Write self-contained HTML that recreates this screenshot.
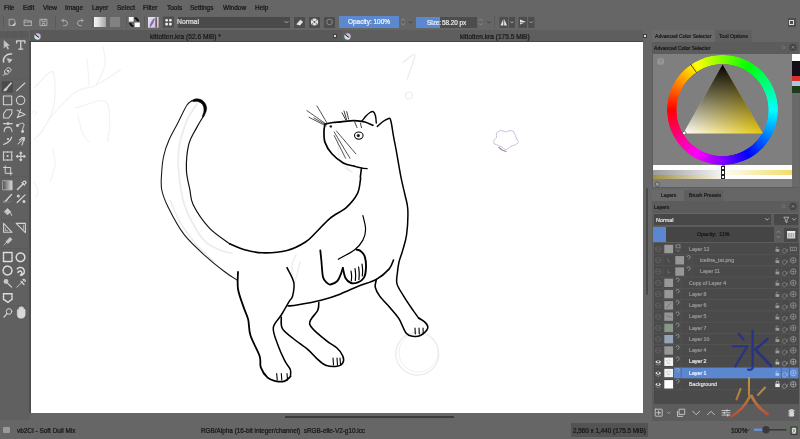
<!DOCTYPE html>
<html><head><meta charset="utf-8">
<style>
*{box-sizing:border-box;margin:0;padding:0}
html,body{width:800px;height:439px;overflow:hidden;background:#666;font-family:"Liberation Sans",sans-serif;color:#222}
.a{position:absolute}
.t{position:absolute;white-space:nowrap;line-height:1;will-change:transform;-webkit-text-stroke:0.22px currentColor}
#menu .t{font-size:6.4px;color:#1e1e1e;top:4.5px}
.btn{position:absolute;background:#555;border-radius:1px}
.sep{position:absolute;width:1px;background:#5a5a5a}
</style></head><body>
<!--TOP--><div class="t" style="left:4px;top:5.3px;font-size:6.5px;color:#161616;">File</div>
<div class="t" style="left:23px;top:5.3px;font-size:6.5px;color:#161616;">Edit</div>
<div class="t" style="left:42.5px;top:5.3px;font-size:6.5px;color:#161616;">View</div>
<div class="t" style="left:64.5px;top:5.3px;font-size:6.5px;color:#161616;">Image</div>
<div class="t" style="left:92px;top:5.3px;font-size:6.5px;color:#161616;">Layer</div>
<div class="t" style="left:117px;top:5.3px;font-size:6.5px;color:#161616;">Select</div>
<div class="t" style="left:143px;top:5.3px;font-size:6.5px;color:#161616;">Filter</div>
<div class="t" style="left:167px;top:5.3px;font-size:6.5px;color:#161616;">Tools</div>
<div class="t" style="left:190px;top:5.3px;font-size:6.5px;color:#161616;">Settings</div>
<div class="t" style="left:222.5px;top:5.3px;font-size:6.5px;color:#161616;">Window</div>
<div class="t" style="left:254.5px;top:5.3px;font-size:6.5px;color:#161616;">Help</div>
<div class="a" style="left:2.8px;top:15.5px;width:1px;height:12.5px;background:#5a5a5a;"></div>
<div class="a" style="left:55px;top:15.5px;width:1px;height:12.5px;background:#5a5a5a;"></div>
<div class="a" style="left:92px;top:15.5px;width:1px;height:12.5px;background:#5a5a5a;"></div>
<div class="a" style="left:125.6px;top:15.5px;width:1px;height:12.5px;background:#5a5a5a;"></div>
<div class="a" style="left:144px;top:15.5px;width:1px;height:12.5px;background:#5a5a5a;"></div>
<div class="a" style="left:494px;top:15.5px;width:1px;height:12.5px;background:#5a5a5a;"></div>
<svg class="a" style="left:0;top:0" width="800" height="40"><g fill="none" stroke="#b4b4b4" stroke-width="0.9" stroke-linejoin="round" stroke-linecap="round"><path d="M9.5 19.3h4.2l1.3 1.3v4.8h-5.5z"/><path d="M13.2 25.4l1.8-1.8" stroke="#e0e0e0" stroke-width="1.2"/><path d="M24.5 20h2.5l0.8 0.8h3.6v4.8h-6.9z"/><path d="M24.5 22h6.9"/><path d="M40.3 19.3h6.6v6.3h-6.6z"/><path d="M42 19.3v2.4h3v-2.4M42.3 25.6v-2.2h2.6v2.2"/><path d="M62 20.5l1.6-1.6M62 20.5l1.6 1.5M62.3 20.5h2.5a2.6 2.6 0 0 1 0 5.2h-1.2"/><path d="M83 20.5l-1.6-1.6M83 20.5l-1.6 1.5M82.7 20.5h-2.5a2.6 2.6 0 0 0 0 5.2h1.2"/></g><rect x="128.8" y="17" width="4.8" height="4.6" fill="#fafafa"/><rect x="134.6" y="22.5" width="5.2" height="4.6" fill="#fafafa"/><path d="M134.6 17.2a4 4 0 0 1 4 4h-1.8a2.2 2.2 0 0 0-2.2-2.2z" fill="#111"/><circle cx="138.2" cy="20.6" r="0.9" fill="#111"/><path d="M133.6 27a4 4 0 0 1-4-4h1.8a2.2 2.2 0 0 0 2.2 2.2z" fill="#111"/><circle cx="130" cy="23.6" r="0.9" fill="#111"/><defs><linearGradient id="bp" x1="0" y1="0" x2="1" y2="1"><stop offset="0" stop-color="#e8e4f0"/><stop offset="1" stop-color="#c8c0d8"/></linearGradient></defs><rect x="148" y="17" width="10.6" height="10.7" fill="url(#bp)"/><path d="M149.6 26.6c0.2-2 1.5-5 3.6-7.6 0.8-0.8 1.6-0.4 1.4 0.6-0.6 2.6-2.2 5.6-4 7.2z" fill="#7860b0" opacity="0.9"/><rect x="155.3" y="17.3" width="1.6" height="10.2" fill="#6a5050"/><rect x="162.8" y="16.5" width="11.2" height="11.2" fill="#4e4e4e"/><rect x="165.2" y="19" width="2.8" height="2.6" rx="1" fill="#e8e8e8"/><rect x="169" y="19" width="2.8" height="2.6" rx="1" fill="#e8e8e8"/><rect x="165.2" y="22.8" width="2.8" height="2.6" rx="1" fill="#e8e8e8"/><rect x="169" y="22.8" width="2.8" height="2.6" rx="1" fill="#e8e8e8"/></svg>
<div class="a" style="left:94px;top:16.9px;width:11.6px;height:10.6px;background:linear-gradient(90deg,#f2f2f2,#e6e6e6 30%,#a4a4a4);"></div>
<div class="a" style="left:109.6px;top:16.9px;width:10.4px;height:10.6px;background:#818181;"></div>
<div class="a" style="left:177.7px;top:16.7px;width:112.3px;height:11px;background:#4a4a4a;"></div>
<div class="t" style="left:177.3px;top:19.3px;font-size:6.8px;color:#e0e0e0;">Normal</div>
<svg class="a" style="left:0;top:0" width="800" height="40"><g fill="none" stroke="#bbb" stroke-width="0.8"><path d="M284.5 21l2 2 2-2"/></g></svg>
<div class="a" style="left:294px;top:16.5px;width:11px;height:11px;background:#4d4d4d;"></div>
<div class="a" style="left:309px;top:16.5px;width:11px;height:11px;background:#4d4d4d;"></div>
<div class="a" style="left:324px;top:16.5px;width:11px;height:11px;background:#4d4d4d;"></div>
<svg class="a" style="left:0;top:0" width="800" height="40"><path d="M296.5 24.5h4.5M297 23.8l3.5-3.8 2.2 2-3 3.3z" fill="#e6e6e6" stroke="#e6e6e6" stroke-width="0.6"/><circle cx="314.5" cy="22" r="3.6" fill="#e6e6e6"/><circle cx="314.5" cy="22" r="1.1" fill="#4d4d4d"/><circle cx="312.6" cy="20.1" r="0.7" fill="#4d4d4d"/><circle cx="316.4" cy="20.1" r="0.7" fill="#4d4d4d"/><circle cx="312.6" cy="23.9" r="0.7" fill="#4d4d4d"/><circle cx="316.4" cy="23.9" r="0.7" fill="#4d4d4d"/><circle cx="329.5" cy="22" r="2.8" fill="none" stroke="#999" stroke-width="0.8"/></svg>
<div class="a" style="left:338.5px;top:16.2px;width:60.5px;height:11.8px;background:#5b88cf;"></div>
<div class="t" style="left:347.8px;top:19.2px;font-size:6.46px;color:#eef2fa;">Opacity: 100%</div>
<div class="a" style="left:416.2px;top:16.9px;width:60.5px;height:11px;background:#4d4d4d;"></div>
<div class="a" style="left:416.2px;top:16.9px;width:23.4px;height:11px;background:#5b88cf;"></div>
<div class="t" style="left:427px;top:19.5px;font-size:6.33px;color:#eef2fa;">Size:</div>
<div class="t" style="left:441.7px;top:19.5px;font-size:6.33px;color:#e8e8e8;">58.20 px</div>
<svg class="a" style="left:0;top:0" width="800" height="40"><g fill="none" stroke="#999" stroke-width="0.7" stroke-linecap="round" stroke-linejoin="round"><path d="M401.5 20.5l1.6-1.6 1.6 1.6M401.5 23.5l1.6 1.6 1.6-1.6"/><path d="M479 20.5l1.6-1.6 1.6 1.6M479 23.5l1.6 1.6 1.6-1.6"/></g><g fill="none" stroke="#333" stroke-width="0.8"><path d="M409 21.5l1.6 1.6 1.6-1.6"/><path d="M487.3 21.5l1.6 1.6 1.6-1.6"/></g><rect x="499.5" y="16.9" width="8.5" height="11" fill="#4d4d4d"/><rect x="509" y="16.9" width="6" height="11" fill="#4d4d4d"/><rect x="518.5" y="16.9" width="8.5" height="11" fill="#4d4d4d"/><rect x="528.2" y="16.9" width="6.2" height="11" fill="#4d4d4d"/><path d="M503.3 19v6.5h-2.8z" fill="#e6e6e6"/><path d="M504.2 19v6.5h2.8z" fill="#e6e6e6"/><path d="M520 19.5l6 2.5-6 2.5z" fill="#e6e6e6"/><path d="M520 22.6h6" stroke="#4d4d4d" stroke-width="0.6"/><g fill="none" stroke="#ccc" stroke-width="0.7"><path d="M510.5 21.5l1.5 1.5 1.5-1.5M529.8 21.5l1.5 1.5 1.5-1.5"/></g></svg>
<div class="a" style="left:787.5px;top:17.5px;width:8px;height:9.5px;background:#4d4d4d;"></div>
<div class="a" style="left:789px;top:19.5px;width:5px;height:5px;border:0.8px solid #ddd"></div>
<div class="a" style="left:0px;top:30.5px;width:28.5px;height:7px;background:#5a5a5a;"></div>
<div class="a" style="left:7px;top:31px;width:0.6px;height:6px;background:#555;"></div>
<div class="a" style="left:14px;top:31px;width:0.6px;height:6px;background:#555;"></div>
<div class="a" style="left:21px;top:31px;width:0.6px;height:6px;background:#555;"></div>
<div class="a" style="left:0px;top:37.5px;width:30px;height:382.5px;background:#606060;"></div>
<div class="a" style="left:30px;top:30px;width:613px;height:11.5px;background:#595959;"></div>
<div class="a" style="left:342px;top:30px;width:301px;height:11.5px;background:#5e5e5e;"></div>
<div class="t" style="left:150px;top:33.6px;font-size:6.62px;color:#1a1a1a;">kittotten.kra (52.6 MiB) *</div>
<div class="t" style="left:460.25px;top:33.6px;font-size:6.57px;color:#1a1a1a;">kittotten.kra (175.5 MiB)</div>
<svg class="a" style="left:33.5px;top:32.5px" width="7" height="7" viewBox="0 0 7 7"><defs><linearGradient id="ki37" x1="1" y1="0" x2="0" y2="1"><stop offset="0" stop-color="#e8b0e8"/><stop offset="0.5" stop-color="#c8b8e0"/><stop offset="0.55" stop-color="#e8f4f4"/><stop offset="1" stop-color="#80d0d0"/></linearGradient></defs><circle cx="3.5" cy="3.5" r="3.2" fill="url(#ki37)"/><path d="M1.3 1.6l3 2.6" stroke="#2a2a40" stroke-width="1.1" stroke-linecap="round"/></svg>
<svg class="a" style="left:344.3px;top:32.5px" width="7" height="7" viewBox="0 0 7 7"><defs><linearGradient id="ki347" x1="1" y1="0" x2="0" y2="1"><stop offset="0" stop-color="#e8b0e8"/><stop offset="0.5" stop-color="#c8b8e0"/><stop offset="0.55" stop-color="#e8f4f4"/><stop offset="1" stop-color="#80d0d0"/></linearGradient></defs><circle cx="3.5" cy="3.5" r="3.2" fill="url(#ki347)"/><path d="M1.3 1.6l3 2.6" stroke="#2a2a40" stroke-width="1.1" stroke-linecap="round"/></svg>
<div class="a" style="left:332.5px;top:33.8px;width:4.8px;height:4.4px;background:#3e3e3e;"></div>
<div class="a" style="left:334.0px;top:35.2px;width:1.8px;height:1.6px;background:#ddd;"></div>
<div class="a" style="left:642.5px;top:33.8px;width:4.8px;height:4.4px;background:#3e3e3e;"></div>
<div class="a" style="left:644.0px;top:35.2px;width:1.8px;height:1.6px;background:#ddd;"></div>
<div class="a" style="left:29.2px;top:41px;width:1.4px;height:371.5px;background:#4e4e4e;"></div>
<div class="a" style="left:29.2px;top:41px;width:614px;height:1.1px;background:#464646;"></div>
<div class="a" style="left:3.2px;top:427px;width:7px;height:6.3px;background:#9a9a9a;border-radius:1px"></div>
<div class="t" style="left:17px;top:428px;font-size:6.43px;color:#161616;">vb2CI - Soft Dull Mix</div>
<div class="t" style="left:200.6px;top:428px;font-size:6.39px;color:#161616;">RGB/Alpha (16-bit integer/channel)&nbsp; sRGB-elle-V2-g10.icc</div>
<div class="a" style="left:571px;top:423.4px;width:77px;height:13.6px;background:#535353;"></div>
<div class="t" style="left:573.4px;top:428px;font-size:6.33px;color:#161616;">2,560 x 1,440 (175.5 MiB)</div>
<div class="t" style="left:730.6px;top:428px;font-size:6.4px;color:#161616;">100%</div>
<svg class="a" style="left:0;top:400px" width="800" height="39"><path d="M746.5 29l1.6 1.6 1.6-1.6" fill="none" stroke="#222" stroke-width="0.7"/><rect x="753.5" y="29" width="33" height="1.6" fill="#3a3a3a"/><rect x="753.5" y="28.6" width="12.5" height="2.4" fill="#6a90d0" rx="1"/><circle cx="766" cy="29.8" r="3.7" fill="#3a3a3a"/><rect x="790.5" y="26.5" width="7" height="8.5" fill="#3a3a3a"/><rect x="791.8" y="27.8" width="4.4" height="5.8" fill="#e0e8e0"/><path d="M792.4 28.6l3.2 4.2M795.6 28.6l-3.2 4.2" stroke="#3a8a3a" stroke-width="0.7"/></svg>
<div class="a" style="left:285px;top:416.2px;width:169px;height:1.8px;background:#3c3c3c;"></div><!--/TOP-->
<!-- CANVAS -->
<div class="a" style="left:30.5px;top:42px;width:612.5px;height:370.5px;background:#fff;overflow:hidden">
</div>
<!--TOOLS--><svg class="a" style="left:0;top:0" width="30" height="439"><rect x="1.8" y="81.2" width="11" height="11.4" fill="#4b4b4b"/><rect x="1" y="78.5" width="27" height="0.6" fill="#585858"/><rect x="1" y="148.7" width="27" height="0.6" fill="#585858"/><rect x="1" y="176.5" width="27" height="0.6" fill="#585858"/><rect x="1" y="220" width="27" height="0.6" fill="#585858"/><rect x="1" y="248" width="27" height="0.6" fill="#585858"/><rect x="1" y="305.5" width="27" height="0.6" fill="#585858"/><g fill="none" stroke="#d2d2d2" stroke-width="1.05" stroke-linecap="round" stroke-linejoin="round"><path d="M4.2 40.7l5.2 4.6-2.3 0.3 1.6 3.2-1 0.5-1.6-3.2-1.9 1.6z" fill="#c8c8c8" stroke="#c8c8c8" stroke-width="0.5"/><path d="M16.6 40.8h8.3v2.3M16.6 40.8v2.3M20.75 40.8v8.3M18.7 49.1h4.1" stroke-width="1.3"/><path d="M3.5 62a7 7 0 0 1 8-8" stroke-width="1.5"/><path d="M7.3 58.5l4.8 1.2-2.8 3z" fill="#c8c8c8" stroke-width="0.5"/><path d="M16.8 54.6l9.2 8.8" stroke="#6a5c78" stroke-width="0.8" stroke-dasharray="1.2 1"/><path d="M3.2 75.5l2.5-2.5M5 73.5l-0.5-2.5 4-4 3 3-4 4z" stroke-width="1"/><circle cx="8" cy="70.8" r="0.6" fill="#c4c4c4"/><path d="M11 83.2l-4.2 4.8" stroke-width="1.6"/><path d="M4 90.8c0-1.8 1.2-3.2 3-2.8 0.6 1.8-0.8 3.2-3 2.8z" fill="#d0d0d0" stroke-width="0.6"/><path d="M16.5 90.8l8.4-7.8"/><rect x="3.4" y="96" width="8.3" height="8.7"/><circle cx="20.6" cy="100.3" r="4.2"/><path d="M3.6 113.6l2.9-3.8h5.4v3.6l-3.2 4.6h-5.1z"/><path d="M17.2 110.2l8 4.4-8 3M17.5 117.6l3.2-8.2"/><path d="M4.2 131.6c0-6 7.8-6 7.8 0M3.5 123.6h8.8"/><circle cx="8" cy="123.6" r="0.9" fill="#c4c4c4"/><path d="M17.3 126c2-3 7-4 6.7-1-0.3 2.4-2.2 3.4-1.2 6.6" stroke-width="1"/><circle cx="17.5" cy="125.5" r="0.9" fill="#c4c4c4"/><circle cx="22.6" cy="131.5" r="0.9" fill="#c4c4c4"/><path d="M3.5 144.5c3-1 7-3 8.2-7.5"/><circle cx="8" cy="139" r="0.6" fill="#c4c4c4"/><path d="M18 144l6.5-6.5M24.5 137.5l-3 0.3M24.5 137.5l-0.3 3M19.5 140l3-2.5M22 145l2-6"/><rect x="3.5" y="152" width="8.2" height="8"/><circle cx="7.6" cy="156" r="0.5" fill="#c4c4c4"/><rect x="2.8" y="151.3" width="1.4" height="1.4" fill="#c4c4c4" stroke="none"/><rect x="11.0" y="151.3" width="1.4" height="1.4" fill="#c4c4c4" stroke="none"/><rect x="2.8" y="159.3" width="1.4" height="1.4" fill="#c4c4c4" stroke="none"/><rect x="11.0" y="159.3" width="1.4" height="1.4" fill="#c4c4c4" stroke="none"/><rect x="6.8999999999999995" y="151.3" width="1.4" height="1.4" fill="#c4c4c4" stroke="none"/><rect x="6.8999999999999995" y="159.3" width="1.4" height="1.4" fill="#c4c4c4" stroke="none"/><rect x="2.8" y="155.3" width="1.4" height="1.4" fill="#c4c4c4" stroke="none"/><rect x="11.0" y="155.3" width="1.4" height="1.4" fill="#c4c4c4" stroke="none"/><path d="M20.8 152.4v8M16.8 156.4h8" stroke-width="1.1"/><path d="M20.8 152l-1 1.2h2zM20.8 160.8l-1-1.2h2zM16.4 156.4l1.2-1v2zM25.2 156.4l-1.2-1v2z" fill="#c4c4c4"/><path d="M5.2 165.8v7.5h7M3.5 167.5h7.2v7.5" stroke-width="1"/><rect x="3" y="180.7" width="9.2" height="9.2" fill="url(#tg)" stroke="#bbb" stroke-width="0.7"/><path d="M17.5 189.5l5.8-5.8" stroke-width="1.5"/><path d="M22 182.5l2.6 2.6M23.5 181.5a1.3 1.3 0 0 1 2 2" stroke-width="1.4"/><path d="M11.5 194.5l-4.5 5" stroke-width="1.3"/><path d="M4 202c1-1.2 2-2.8 3.2-2.5 0.4 1.4-1.5 2.8-3.2 2.5z" fill="#c8c8c8" stroke-width="0.5"/><path d="M3 200a5 3 0 0 0 9 1" stroke="#888" stroke-width="0.6"/><path d="M17.2 202.5l7.8-7.6" stroke-width="1.3"/><circle cx="18.3" cy="196" r="1" fill="#c4c4c4"/><circle cx="24" cy="201.5" r="1" fill="#c4c4c4"/><path d="M4.5 211.5l3-3 3.2 3.2-3 3z" fill="#c8c8c8" stroke-width="0.7"/><path d="M10.5 212.5l1.2 3" stroke-width="0.9"/><path d="M3.6 223.3v9h8.5z" stroke-width="1.1"/><path d="M5.4 228.2v2.4h2.4" stroke-width="0.7"/><path d="M16.2 223.4h9.2v9.2z" stroke-width="1.1"/><path d="M23.6 225.2v4" stroke-width="0.7"/><path d="M4 245l3-3" stroke-width="0.8"/><path d="M6.2 241.5l3.8-4 2 2-4 3.8z" fill="#c8c8c8" stroke-width="0.8"/><g stroke-dasharray="1.6 1" stroke-width="1.5" stroke="#dedede"><rect x="3.5" y="252.5" width="8.5" height="9"/><circle cx="20.5" cy="257.3" r="4.3"/><circle cx="7.5" cy="270.5" r="4.4"/><path d="M17.3 268.8a4 4 0 1 1 4 6.5M18 272.5a2 2 0 1 1 2.5 2.5"/><path d="M3.5 293.8h8.5v5.5l-4 3-4.5-3z"/></g><circle cx="6" cy="281.5" r="2.4" fill="#c8c8c8" stroke="none"/><path d="M7.8 283.5l3.8 3.6" stroke-width="1.1"/><path d="M17 287.2l7-7" stroke-width="1" stroke-dasharray="1.3 1"/><path d="M21 281.5l3 3M23 279.5a1.5 1.5 0 0 1 2 2" stroke-width="1.3"/><circle cx="9" cy="311.5" r="2.8" stroke-width="1"/><path d="M7 313.6l-3 3.5" stroke-width="1.3"/><path d="M17.2 312.6v-2.4a0.8 0.8 0 0 1 1.6 0v1.5v-3.6a0.8 0.8 0 0 1 1.6 0v3.2v-4a0.8 0.8 0 0 1 1.6 0v4v-3.4a0.8 0.8 0 0 1 1.6 0v3.8v-1.8a0.8 0.8 0 0 1 1.6 0v4.6c0 2.2-1.4 3.8-3.4 3.8h-1.6c-1.6 0-2.6-1.2-3-3z" fill="#dadada" stroke="#dadada" stroke-width="0.4"/></g><defs><linearGradient id="tg" x1="0" y1="0" x2="1" y2="0"><stop offset="0" stop-color="#555"/><stop offset="1" stop-color="#ddd"/></linearGradient></defs></svg><!--/TOOLS-->
<!--CAT--><svg class="a" style="left:0;top:0" width="800" height="439" viewBox="0 0 800 439"><defs><clipPath id="cv"><rect x="30.5" y="42" width="612.5" height="370.5"/></clipPath></defs><g clip-path="url(#cv)" fill="none" stroke-linecap="round" stroke-linejoin="round">
<path d="M197.0 104.0 C195.5 106.3 190.7 112.3 188.0 118.0 C185.3 123.7 182.6 132.7 181.0 138.0 C179.4 143.3 179.1 144.7 178.7 150.0 C178.3 155.3 177.8 161.7 178.5 170.0 C179.2 178.3 180.8 191.3 183.0 200.0 C185.2 208.7 188.3 215.1 192.0 222.0 C195.7 228.9 200.6 237.0 205.3 241.7 C210.0 246.4 215.6 248.0 220.0 250.0 C224.4 252.0 230.0 252.9 232.0 253.5" stroke="#ececec" stroke-width="1.8"/>
<path d="M170.0 200.0 C171.7 203.7 175.7 214.7 180.0 222.0 C184.3 229.3 190.3 237.3 196.0 244.0 C201.7 250.7 211.0 259.0 214.0 262.0" stroke="#ededed" stroke-width="1.5"/>
<circle cx="417.3" cy="353.7" r="21.5" fill="none" stroke="#eaeaea" stroke-width="1.2"/><circle cx="418.5" cy="352.5" r="19.5" fill="none" stroke="#efefef" stroke-width="1"/>
<path d="M296.0 255.0 C295.3 256.8 292.3 261.2 292.0 266.0 C291.7 270.8 292.7 284.7 294.0 284.0 C295.3 283.3 299.0 265.7 300.0 262.0" stroke="#eeeeee" stroke-width="1.5"/>
<path d="M338.0 140.0 C338.3 143.3 337.7 154.7 340.0 160.0 C342.3 165.3 351.2 170.7 352.0 172.0 C352.8 173.3 346.2 168.7 345.0 168.0" stroke="#eeeeee" stroke-width="1.2"/>
<path d="M403.3 62.2 C405.2 61.0 414.3 52.4 414.9 55.2 C415.5 58.0 408.4 75.2 407.1 79.2" stroke="#ebebeb" stroke-width="1.2"/>
<circle cx="409" cy="95.5" r="3.5" fill="none" stroke="#ededed" stroke-width="1.2"/>
<path d="M34.5 87.6 C37.4 84.9 48.2 71.6 51.6 71.6 C55.0 71.6 54.8 81.2 55.0 87.6 C55.2 94.0 54.7 103.2 52.8 110.0 C50.9 116.8 46.8 123.6 43.7 128.6 C40.6 133.6 35.6 138.1 34.0 140.0" stroke="#f1f1f1" stroke-width="1.2"/>
<circle cx="34.5" cy="112.6" r="2" fill="none" stroke="#efefef" stroke-width="0.8"/>
<path d="M50.5 117.0 C54.7 112.8 68.0 97.3 75.6 92.0 C83.2 86.7 88.4 89.1 96.0 85.3 C103.6 81.5 116.8 72.0 121.0 69.3" stroke="#f2f2f2" stroke-width="1.2"/>
<path d="M96.0 85.3 C97.5 81.9 103.8 71.2 105.0 64.8 C106.2 58.3 103.3 49.6 103.0 46.6" stroke="#f2f2f2" stroke-width="1.2"/>
<path d="M87.0 58.0 C87.4 62.5 88.8 80.8 89.2 85.3" stroke="#f3f3f3" stroke-width="1.2"/>
<path d="M75.6 108.0 C80.5 106.9 99.3 98.5 105.0 101.2 C110.7 103.9 109.3 117.2 109.7 124.0 C110.1 130.8 107.8 139.0 107.4 142.0" stroke="#f2f2f2" stroke-width="1.2"/>
<path d="M77.8 115.0 C78.6 118.0 80.5 128.5 82.4 133.0 C84.3 137.5 88.1 140.5 89.2 142.0" stroke="#f3f3f3" stroke-width="1.2"/>
<path d="M53.0 150.0 C53.3 152.5 55.5 159.7 55.0 165.0 C54.5 170.3 50.8 179.2 50.0 182.0" stroke="#f3f3f3" stroke-width="1.2"/>
<path d="M34.0 182.0 C34.7 183.7 37.8 189.3 38.0 192.0 C38.2 194.7 35.5 197.0 35.0 198.0" stroke="#f2f2f2" stroke-width="1.2"/>
<path d="M517.1 139.5 L518.5 141.7 L517.2 143.7 L514.9 145.0 L512.4 145.8 L510.4 146.6 L508.5 148.2 L506.0 149.9 L503.4 148.5 L501.5 146.7 L499.2 146.1 L497.3 144.9 L494.2 143.9 L493.6 141.7 L494.3 139.5 L496.5 137.8 L496.4 135.9 L496.4 133.5 L498.0 131.6 L500.5 130.5 L503.5 131.0 L506.0 132.1 L508.5 130.9 L511.4 130.7 L513.8 131.8 L514.7 134.1 L515.8 135.8 L516.0 137.7Z" fill="none" stroke="#8a68a8" stroke-width="0.8" stroke-dasharray="1 1.1" opacity="0.6"/><path d="M499 147.5l3 2.5 4 1.5" stroke="#7a4a98" stroke-width="1.2" fill="none" opacity="0.7"/>
<path d="M191.6 101.0 C190.8 101.7 189.2 101.5 186.8 105.3 C184.4 109.1 180.3 118.2 177.3 124.0 C174.3 129.8 171.3 134.7 169.0 140.0 C166.7 145.3 164.9 150.2 163.7 156.0 C162.4 161.8 161.8 169.3 161.5 175.0 C161.2 180.7 160.7 184.6 161.8 190.0 C162.9 195.4 164.5 199.9 168.2 207.3 C171.9 214.8 177.7 226.3 184.2 234.7 C190.7 243.0 200.2 251.2 207.0 257.4 C213.8 263.6 220.0 268.2 225.0 272.0 C230.0 275.8 235.0 278.7 237.0 280.0" stroke="#1a1a1a" stroke-width="1.1"/>
<path d="M191.4 100.9C193 99.4 195 98.8 197.1 98.8C200 98.8 202 99.8 203.6 101.4C205.6 103.4 206.8 106 206.7 108.6C206.6 111.5 205 114.5 203.5 117L202 116.5C203.3 114 204 111.5 203.9 109.4C203.7 106.6 203 105 201.8 103.7C200 102.2 198 101.6 196 101.6C194.3 101.6 192.8 101.9 191.4 100.9Z" fill="#000" stroke="#000" stroke-width="0.4"/>
<path d="M204.0 114.0 C203.9 114.3 204.7 113.7 203.5 116.0 C202.3 118.3 199.2 122.8 196.7 127.6 C194.2 132.4 190.4 137.7 188.7 144.7 C187.0 151.7 186.2 162.1 186.4 169.7 C186.6 177.2 188.8 184.1 189.9 190.0 C191.1 195.9 190.1 198.7 193.3 205.0 C196.5 211.3 203.1 221.3 209.2 227.8 C215.3 234.3 226.3 241.1 229.7 243.8" stroke="#111" stroke-width="1.2"/>
<path d="M229.7 243.8 C232.0 244.7 238.3 247.9 243.7 249.4 C249.1 250.9 254.8 252.6 262.0 252.8 C269.2 253.0 279.8 252.3 287.0 250.5 C294.2 248.7 300.6 245.1 305.5 242.0 C310.4 238.9 312.3 235.9 316.4 232.0 C320.5 228.1 325.0 222.4 330.0 218.3 C335.0 214.2 341.9 211.4 346.5 207.3 C351.1 203.2 355.1 198.2 357.4 193.7 C359.7 189.1 359.9 182.8 360.4 180.0 C360.9 177.2 360.2 178.6 360.4 176.6 C360.6 174.6 361.3 169.4 361.5 168.0" stroke="#000" stroke-width="1.6"/>
<path d="M354.7 166.3 C355.8 166.6 358.9 167.4 361.0 167.8 C363.1 168.2 366.2 168.5 367.2 168.6" stroke="#000" stroke-width="1.2"/>
<path d="M325.0 124.2 C324.8 125.3 324.0 128.0 324.0 131.0 C324.0 134.0 323.7 138.6 325.0 142.4 C326.3 146.2 328.8 150.4 331.9 153.8 C334.9 157.2 339.5 160.8 343.3 162.9 C347.1 165.0 352.8 165.7 354.7 166.3" stroke="#000" stroke-width="1.7"/>
<path d="M325.0 124.2 C326.3 123.9 330.3 122.9 333.0 122.5 C335.7 122.1 338.2 122.2 341.0 121.9 C343.8 121.6 347.3 121.0 350.0 120.8 C352.7 120.6 354.5 120.5 357.0 120.8 C359.5 121.0 362.4 121.2 365.0 122.0 C367.6 122.8 371.6 124.8 372.9 125.3" stroke="#000" stroke-width="1.7"/>
<path d="M362.0 121.0 C362.7 120.2 364.7 117.4 366.0 116.0 C367.3 114.6 368.8 113.2 370.0 112.5 C371.2 111.8 372.6 111.2 373.5 111.8 C374.4 112.4 375.0 114.1 375.5 116.0 C376.0 117.9 376.2 121.8 376.3 123.0" stroke="#000" stroke-width="1.4"/>
<path d="M377.4 126.4 C378.3 125.6 381.3 122.7 383.0 121.5 C384.7 120.3 386.3 119.5 387.5 119.0 C388.7 118.5 389.3 117.7 390.0 118.5 C390.7 119.3 390.9 121.2 391.5 124.0 C392.1 126.8 392.6 131.4 393.4 135.6 C394.1 139.8 394.7 142.2 396.0 149.2 C397.3 156.2 399.5 169.8 401.0 177.4 C402.5 185.0 403.9 189.7 405.0 195.0 C406.1 200.3 407.5 202.7 407.8 209.3 C408.1 215.9 407.5 227.8 406.6 234.7 C405.7 241.6 403.8 246.4 402.5 251.0 C401.2 255.6 399.8 258.5 399.0 262.0 C398.2 265.5 397.8 268.4 397.5 272.0 C397.2 275.6 395.9 279.8 397.0 283.9 C398.1 288.0 401.2 292.0 403.8 296.4 C406.4 300.8 410.4 306.5 412.9 310.1 C415.4 313.7 417.7 316.7 418.6 318.0" stroke="#000" stroke-width="1.5"/>
<ellipse cx="358.8" cy="135.6" rx="4.3" ry="3.6" fill="none" stroke="#111" stroke-width="1.1"/>
<circle cx="358.3" cy="135.6" r="1.6" fill="#222"/>
<circle cx="330.8" cy="126.4" r="1.2" fill="#111"/>
<path d="M326.0 124.0 C322.8 121.8 310.0 112.8 306.8 110.5" stroke="#222" stroke-width="0.8"/>
<path d="M327.0 123.0 C325.3 120.2 318.7 108.8 317.0 106.0" stroke="#222" stroke-width="0.8"/>
<path d="M326.0 126.0 C323.2 124.5 311.8 118.8 309.0 117.3" stroke="#222" stroke-width="0.8"/>
<path d="M326.0 125.0 C324.0 123.8 316.0 119.2 314.0 118.0" stroke="#222" stroke-width="0.8"/>
<path d="M334.2 132.0 C336.8 136.4 347.4 153.9 350.0 158.3" stroke="#222" stroke-width="0.8"/>
<path d="M336.4 131.0 C339.6 134.8 352.6 150.0 355.8 153.8" stroke="#222" stroke-width="0.8"/>
<path d="M334.2 135.6 C336.1 139.4 343.7 154.5 345.6 158.3" stroke="#222" stroke-width="0.8"/>
<path d="M342.0 112.8 C342.6 113.9 345.0 118.5 345.6 119.6" stroke="#222" stroke-width="0.9"/>
<path d="M346.7 111.6 C347.0 112.8 348.3 117.8 348.6 119.0" stroke="#222" stroke-width="0.9"/>
<path d="M354.7 122.0 C355.1 122.9 356.6 126.7 357.0 127.6" stroke="#222" stroke-width="0.9"/>
<path d="M360.4 123.0 C360.6 123.8 361.3 126.8 361.5 127.6" stroke="#222" stroke-width="0.9"/>
<path d="M344.0 111.0 C344.5 112.7 346.5 119.3 347.0 121.0" stroke="#222" stroke-width="0.9"/>
<path d="M362.9 215.5 C363.3 217.8 365.6 225.1 365.6 229.2 C365.6 233.3 364.7 236.7 362.9 240.1 C361.1 243.5 358.8 246.5 354.7 249.7 C350.6 252.9 341.0 257.7 338.3 259.3" stroke="#000" stroke-width="1.2"/>
<path d="M320.3 250.3 C320.5 252.2 321.1 257.6 321.5 262.0 C321.9 266.4 322.2 273.6 323.0 277.0 C323.8 280.4 325.2 281.2 326.5 282.5 C327.8 283.8 328.7 284.8 330.5 284.5 C332.3 284.2 335.7 282.7 337.4 281.0 C339.1 279.3 339.9 276.4 340.8 274.2 C341.7 272.0 342.5 269.0 342.8 268.0" stroke="#000" stroke-width="1.8"/>
<path d="M342.8 268.0 C343.3 269.7 344.2 275.8 345.6 278.3 C347.0 280.8 348.9 282.3 351.0 283.0 C353.1 283.7 355.7 283.3 357.9 282.4 C360.1 281.5 362.6 280.1 364.0 277.6 C365.4 275.1 365.9 270.9 366.0 267.4 C366.1 263.9 365.6 259.1 364.7 256.4 C363.8 253.7 362.0 252.1 360.6 251.0 C359.2 249.9 357.2 249.8 356.5 249.6" stroke="#000" stroke-width="1.9"/>
<path d="M351.0 271.0 C351.1 271.8 351.6 274.3 351.6 276.0 C351.7 277.7 351.4 280.2 351.3 281.0" stroke="#000" stroke-width="1.2"/>
<path d="M355.0 268.5 C355.1 269.5 355.6 272.5 355.6 274.5 C355.7 276.5 355.4 279.5 355.3 280.5" stroke="#000" stroke-width="1.2"/>
<path d="M358.6 267.0 C358.7 268.0 359.2 271.2 359.2 273.2 C359.3 275.3 359.0 278.5 358.9 279.5" stroke="#000" stroke-width="1.2"/>
<path d="M362.0 264.0 C362.1 265.0 362.6 268.0 362.6 270.0 C362.7 272.0 362.4 275.0 362.3 276.0" stroke="#000" stroke-width="1.2"/>
<path d="M288.0 306.0 C289.7 305.8 292.8 305.8 298.3 304.8 C303.8 303.9 314.1 302.1 321.0 300.3 C327.9 298.5 333.8 296.6 340.0 294.2 C346.2 291.8 352.1 288.7 358.2 286.2 C364.3 283.7 371.3 282.2 376.4 279.4 C381.5 276.5 386.1 272.3 389.0 269.1 C391.9 265.9 392.8 261.5 393.5 260.0" stroke="#000" stroke-width="1.6"/>
<path d="M287.0 267.6 C288.1 270.1 292.9 277.7 293.8 282.4 C294.7 287.1 293.4 292.8 292.6 296.0 C291.8 299.2 291.1 298.2 289.2 301.4 C287.3 304.6 283.9 310.6 281.3 315.0 C278.7 319.4 273.9 322.7 273.3 327.6 C272.7 332.6 275.9 339.2 277.8 344.7 C279.7 350.2 282.6 356.4 284.7 360.6 C286.8 364.8 289.4 367.0 290.4 369.7 C291.3 372.4 290.4 375.5 290.4 376.6" stroke="#000" stroke-width="1.5"/>
<path d="M238.0 272.0 C238.0 274.8 237.1 283.1 238.0 289.0 C238.9 294.9 242.0 302.3 243.7 307.4 C245.4 312.5 247.1 314.9 248.2 319.6 C249.3 324.3 248.6 329.5 250.5 335.6 C252.4 341.7 257.9 350.7 259.6 356.0 C261.3 361.3 259.5 363.8 260.8 367.4 C262.1 371.0 265.1 375.4 267.6 377.7 C270.1 380.0 272.8 380.5 275.6 381.1 C278.5 381.7 282.2 381.9 284.7 381.1 C287.2 380.4 289.4 377.4 290.4 376.6" stroke="#000" stroke-width="1.8"/>
<path d="M276.7 373.5 C276.8 374.6 277.1 378.9 277.2 380.0" stroke="#000" stroke-width="1.1"/>
<path d="M281.3 373.5 C281.4 374.6 281.7 378.9 281.8 380.0" stroke="#000" stroke-width="1.1"/>
<path d="M287.0 373.5 C287.1 374.6 287.4 378.9 287.5 380.0" stroke="#000" stroke-width="1.1"/>
<path d="M318.8 302.5 C318.6 303.8 319.2 306.9 317.7 310.5 C316.2 314.1 308.4 319.3 309.7 324.2 C311.0 329.1 321.1 336.1 325.7 340.1 C330.2 344.1 334.1 345.4 337.0 348.0 C339.9 350.6 341.8 353.5 342.8 356.0 C343.8 358.5 343.8 361.2 342.8 362.9 C341.8 364.6 339.9 365.9 337.0 366.3 C334.1 366.7 329.1 366.5 325.7 365.2 C322.3 363.9 319.7 361.0 316.6 358.3 C313.6 355.6 311.2 352.4 307.4 349.2 C303.6 346.0 298.0 342.4 293.8 339.0 C289.6 335.6 284.5 332.3 282.4 328.7 C280.3 325.1 281.5 319.2 281.3 317.3" stroke="#000" stroke-width="1.6"/>
<path d="M333.0 358.0 C333.1 359.2 333.4 363.8 333.5 365.0" stroke="#000" stroke-width="1.1"/>
<path d="M337.0 358.0 C337.1 359.2 337.4 363.8 337.5 365.0" stroke="#000" stroke-width="1.1"/>
<path d="M340.0 358.0 C340.1 359.2 340.4 363.8 340.5 365.0" stroke="#000" stroke-width="1.1"/>
<path d="M376.4 279.4 C376.2 280.7 374.7 284.5 375.3 287.3 C375.9 290.1 377.4 293.0 379.9 296.4 C382.4 299.8 386.9 304.0 390.1 307.8 C393.3 311.6 396.6 315.0 399.2 319.2 C401.8 323.4 403.7 330.0 406.0 332.9 C408.3 335.8 410.4 335.9 412.9 336.3 C415.4 336.7 418.4 336.5 420.9 335.2 C423.4 333.9 426.9 330.4 427.7 328.3 C428.4 326.2 426.9 324.3 425.4 322.6 C423.9 320.9 419.7 318.8 418.6 318.0" stroke="#000" stroke-width="1.6"/>
<path d="M415.0 328.0 C415.1 329.0 415.2 333.0 415.3 334.0" stroke="#000" stroke-width="1.1"/>
<path d="M419.0 328.0 C419.1 329.0 419.2 333.0 419.3 334.0" stroke="#000" stroke-width="1.1"/>
<path d="M423.0 328.0 C423.1 329.0 423.2 333.0 423.3 334.0" stroke="#000" stroke-width="1.1"/>
</g></svg><!--/CAT-->

<!-- RIGHT DOCK -->
<!--DOCK--><div class="a" style="left:652px;top:30px;width:63px;height:11.5px;background:#6a6a6a;"></div>
<div class="t" style="left:655.4px;top:33.8px;font-size:5.1px;color:#1a1a1a;">Advanced Color Selector</div>
<div class="a" style="left:715px;top:30px;width:37px;height:11.5px;background:#5f5f5f;"></div>
<div class="t" style="left:719.2px;top:33.8px;font-size:5.22px;color:#1a1a1a;">Tool Options</div>
<div class="a" style="left:652px;top:41.5px;width:147px;height:146px;background:#5c5c5c;"></div>
<div class="t" style="left:654.2px;top:45.5px;font-size:5.1px;color:#1a1a1a;">Advanced Color Selector</div>
<div class="a" style="left:653px;top:54px;width:139px;height:133px;background:#7f7f7f;"></div>
<div class="a" style="left:792px;top:54px;width:7px;height:133px;background:#6a6a6a;"></div>
<div class="a" style="left:792px;top:54px;width:7.5px;height:7px;background:#ffffff;"></div>
<div class="a" style="left:792px;top:61px;width:7.5px;height:15px;background:#140c18;"></div>
<div class="a" style="left:792px;top:76px;width:7.5px;height:5px;background:#d8302c;"></div>
<div class="a" style="left:792px;top:81px;width:7.5px;height:5px;background:#a8c8dc;"></div>
<div class="a" style="left:792px;top:86px;width:7.5px;height:7px;background:#1c3c1c;"></div>
<div class="a" style="left:653px;top:165.3px;width:69px;height:4.7px;background:#fdfdfd;"></div>
<div class="a" style="left:725px;top:165.3px;width:67px;height:4.7px;background:#fdfdfd;"></div>
<div class="a" style="left:653px;top:170px;width:69px;height:4.6px;background:linear-gradient(90deg,#9a9a9a,#f4f4f4);"></div>
<div class="a" style="left:725px;top:170px;width:67px;height:4.6px;background:linear-gradient(90deg,#fdfcf0,#f2dc6a);"></div>
<div class="a" style="left:653px;top:174.6px;width:69px;height:4.8px;background:linear-gradient(90deg,#a09040,#f8f6ea);"></div>
<div class="a" style="left:725px;top:174.6px;width:67px;height:4.8px;background:#fdfdfd;"></div>
<div class="a" style="left:721px;top:165.5px;width:4px;height:4.5px;border:0.8px solid #222;background:#fff"></div>
<div class="a" style="left:721px;top:170.2px;width:4px;height:4.5px;border:0.8px solid #222;background:#fff"></div>
<div class="a" style="left:721px;top:174.8px;width:4px;height:4.5px;border:0.8px solid #222;background:#fff"></div>
<div class="a" style="left:646px;top:188px;width:2.2px;height:107px;background:#484848;border-radius:1px;"></div>
<div class="a" style="left:651.7px;top:189.6px;width:32.5px;height:11px;background:#6a6a6a;"></div>
<div class="t" style="left:660.8px;top:193.2px;font-size:5.1px;color:#1a1a1a;">Layers</div>
<div class="a" style="left:684.2px;top:189.6px;width:39.3px;height:11px;background:#5f5f5f;"></div>
<div class="t" style="left:688.7px;top:193.2px;font-size:5.1px;color:#1a1a1a;">Brush Presets</div>
<div class="a" style="left:652px;top:200.5px;width:147px;height:220px;background:#5c5c5c;"></div>
<div class="a" style="left:653px;top:212.6px;width:145px;height:0.8px;background:#666;"></div>
<div class="t" style="left:654.3px;top:204.5px;font-size:5.1px;color:#1a1a1a;">Layers</div>
<div class="a" style="left:654px;top:214.4px;width:117px;height:10.4px;background:#484848;"></div>
<div class="t" style="left:656px;top:217.5px;font-size:5.4px;color:#e0e0e0;">Normal</div>
<div class="a" style="left:774px;top:214.4px;width:23.5px;height:10.4px;background:#484848;"></div>
<div class="a" style="left:653px;top:227px;width:121px;height:14.5px;background:#454545;"></div>
<div class="a" style="left:653px;top:227px;width:13px;height:14.5px;background:#5a87cf;"></div>
<div class="t" style="left:697.4px;top:231.5px;font-size:5.3px;color:#161616;">Opacity:&nbsp; 11%</div>
<div class="a" style="left:784px;top:228px;width:13.5px;height:13.5px;background:#484848;"></div>
<div class="a" style="left:653.5px;top:243px;width:145px;height:160.5px;background:#4a4a4a;"></div>
<svg class="a" style="left:0;top:0" width="800" height="439"><path d="M783.5 45.5l1.8 1.8-1.8 1.8-1.8-1.8z" fill="none" stroke="#8a8a8a" stroke-width="0.6"/><circle cx="793" cy="47.3" r="3.6" fill="#444"/><path d="M791.6 45.9l2.8 2.8M794.4 45.9l-2.8 2.8" stroke="#999" stroke-width="0.7"/><path d="M783.5 204.6l1.8 1.8-1.8 1.8-1.8-1.8z" fill="none" stroke="#8a8a8a" stroke-width="0.6"/><circle cx="793" cy="206.4" r="3.6" fill="#444"/><path d="M791.6 205.0l2.8 2.8M794.4 205.0l-2.8 2.8" stroke="#999" stroke-width="0.7"/><rect x="658" y="59" width="5.2" height="5" rx="0.6" fill="none" stroke="#b4b4b4" stroke-width="0.7"/><path d="M658.6 61.1h4M658.6 62.6h4" stroke="#b4b4b4" stroke-width="0.5"/><circle cx="657.3" cy="184.2" r="2.2" fill="#9a9a9a" stroke="#333" stroke-width="0.6"/><g fill="none" stroke="#c8c8c8" stroke-width="0.8" stroke-linecap="round"><path d="M765.5 218.6l1.6 1.6 1.6-1.6"/><path d="M792.5 218.6l1.6 1.6 1.6-1.6"/></g><path d="M783.8 217.2h5l-1.8 2.6v2.8l-1.4-0.8v-2z" fill="none" stroke="#d0d0d0" stroke-width="0.7"/><g fill="none" stroke="#9a9a9a" stroke-width="0.7" stroke-linecap="round"><path d="M776.8 232.6l1.6-1.6 1.6 1.6M776.8 236.2l1.6 1.6 1.6-1.6"/></g><rect x="787" y="231" width="8.2" height="7.6" rx="0.5" fill="#d8d8d8"/><path d="M788.4 233v4.5M790 233v4.5M791.6 233v4.5M793.4 233v4.5" stroke="#777" stroke-width="0.5"/><rect x="787" y="231" width="8.2" height="1.6" fill="#eee"/><rect x="653.5" y="254.18" width="145" height="0.7" fill="#575757"/><rect x="662.8" y="243.40" width="0.6" height="11.28" fill="#565656"/><rect x="780.9" y="243.40" width="0.6" height="11.28" fill="#565656"/><rect x="789" y="243.40" width="0.6" height="11.28" fill="#565656"/><rect x="680.8" y="243.40" width="0.6" height="11.28" fill="#565656"/><rect x="664.3" y="244.80" width="8.8" height="8.4" fill="#9a9a9a"/><rect x="676" y="244.90" width="4" height="3" fill="none" stroke="#aaa" stroke-width="0.6"/><path d="M676.3 249.90l1.7 1.6 1.7-1.6" fill="none" stroke="#aaa" stroke-width="0.6"/><circle cx="658.2" cy="249.04" r="2.7" fill="none" stroke="#6a6a6a" stroke-width="0.7"/><path d="M655.6 249.04h5.2" stroke="#6a6a6a" stroke-width="0.6"/><rect x="775.5" y="249.00" width="3.8" height="2.8" fill="#9a9a9a"/><path d="M776.2 249.00v-1.2a1 1 0 0 1 2 0" fill="none" stroke="#9a9a9a" stroke-width="0.6"/><path d="M787.6 251.60c-1-1.2-1.6-3-3-3-1.3 0-2 1.4-2 2.4 0 1.2 0.8 2.2 1.8 2.2 1.4 0 2.4-3 3.2-4.2" fill="none" stroke="#9a9a9a" stroke-width="0.6"/><rect x="790.3" y="247.20" width="6" height="3.6" fill="none" stroke="#9a9a9a" stroke-width="0.6"/><path d="M792.3 247.20v3.6M794.3 247.20v3.6" stroke="#9a9a9a" stroke-width="0.5"/><rect x="653.5" y="265.45" width="145" height="0.7" fill="#575757"/><rect x="662.8" y="254.68" width="0.6" height="11.28" fill="#565656"/><rect x="780.9" y="254.68" width="0.6" height="11.28" fill="#565656"/><rect x="789" y="254.68" width="0.6" height="11.28" fill="#565656"/><rect x="691.8" y="254.68" width="0.6" height="11.28" fill="#565656"/><rect x="675.3" y="256.07" width="8.8" height="8.4" fill="#979797"/><path d="M668 258.18v3.2h2.3" fill="none" stroke="#777" stroke-width="0.6"/><path d="M687.0 257.18a1.6 1.6 0 1 1 2 1.5l-1 1" fill="none" stroke="#b8b8b8" stroke-width="0.6"/><circle cx="658.2" cy="260.31" r="2.7" fill="none" stroke="#6a6a6a" stroke-width="0.7"/><path d="M655.6 260.31h5.2" stroke="#6a6a6a" stroke-width="0.6"/><rect x="775.5" y="260.28" width="3.8" height="2.8" fill="#9a9a9a"/><path d="M776.2 260.28v-1.2a1 1 0 0 1 2 0" fill="none" stroke="#9a9a9a" stroke-width="0.6"/><path d="M787.6 262.88c-1-1.2-1.6-3-3-3-1.3 0-2 1.4-2 2.4 0 1.2 0.8 2.2 1.8 2.2 1.4 0 2.4-3 3.2-4.2" fill="none" stroke="#9a9a9a" stroke-width="0.6"/><circle cx="793.3" cy="260.31" r="2.8" fill="none" stroke="#9a9a9a" stroke-width="0.7"/><circle cx="793.3" cy="260.31" r="0.9" fill="#9a9a9a"/><path d="M793.3 257.71v1.5M793.3 261.41v1.5M790.6 260.31h1.5M794.6 260.31h1.5" stroke="#9a9a9a" stroke-width="0.6"/><rect x="653.5" y="276.72" width="145" height="0.7" fill="#575757"/><rect x="662.8" y="265.95" width="0.6" height="11.28" fill="#565656"/><rect x="780.9" y="265.95" width="0.6" height="11.28" fill="#565656"/><rect x="789" y="265.95" width="0.6" height="11.28" fill="#565656"/><rect x="691.8" y="265.95" width="0.6" height="11.28" fill="#565656"/><rect x="675.3" y="267.35" width="8.8" height="8.4" fill="#979797"/><path d="M668 269.45v3.2h2.3" fill="none" stroke="#777" stroke-width="0.6"/><path d="M687.0 268.45a1.6 1.6 0 1 1 2 1.5l-1 1" fill="none" stroke="#b8b8b8" stroke-width="0.6"/><circle cx="658.2" cy="271.59" r="2.7" fill="none" stroke="#6a6a6a" stroke-width="0.7"/><path d="M655.6 271.59h5.2" stroke="#6a6a6a" stroke-width="0.6"/><rect x="775.5" y="271.55" width="3.8" height="2.8" fill="#9a9a9a"/><path d="M776.2 271.55v-1.2a1 1 0 0 1 2 0" fill="none" stroke="#9a9a9a" stroke-width="0.6"/><path d="M787.6 274.15c-1-1.2-1.6-3-3-3-1.3 0-2 1.4-2 2.4 0 1.2 0.8 2.2 1.8 2.2 1.4 0 2.4-3 3.2-4.2" fill="none" stroke="#9a9a9a" stroke-width="0.6"/><circle cx="793.3" cy="271.59" r="2.8" fill="none" stroke="#9a9a9a" stroke-width="0.7"/><circle cx="793.3" cy="271.59" r="0.9" fill="#9a9a9a"/><path d="M793.3 268.99v1.5M793.3 272.69v1.5M790.6 271.59h1.5M794.6 271.59h1.5" stroke="#9a9a9a" stroke-width="0.6"/><rect x="653.5" y="288.00" width="145" height="0.7" fill="#575757"/><rect x="662.8" y="277.23" width="0.6" height="11.28" fill="#565656"/><rect x="780.9" y="277.23" width="0.6" height="11.28" fill="#565656"/><rect x="789" y="277.23" width="0.6" height="11.28" fill="#565656"/><rect x="680.8" y="277.23" width="0.6" height="11.28" fill="#565656"/><rect x="664.3" y="278.62" width="8.8" height="8.4" fill="#979797"/><path d="M676.0 279.73a1.6 1.6 0 1 1 2 1.5l-1 1" fill="none" stroke="#b8b8b8" stroke-width="0.6"/><circle cx="658.2" cy="282.86" r="2.7" fill="none" stroke="#6a6a6a" stroke-width="0.7"/><path d="M655.6 282.86h5.2" stroke="#6a6a6a" stroke-width="0.6"/><rect x="775.5" y="282.83" width="3.8" height="2.8" fill="#9a9a9a"/><path d="M776.2 282.83v-1.2a1 1 0 0 1 2 0" fill="none" stroke="#9a9a9a" stroke-width="0.6"/><path d="M787.6 285.43c-1-1.2-1.6-3-3-3-1.3 0-2 1.4-2 2.4 0 1.2 0.8 2.2 1.8 2.2 1.4 0 2.4-3 3.2-4.2" fill="none" stroke="#9a9a9a" stroke-width="0.6"/><circle cx="793.3" cy="282.86" r="2.8" fill="none" stroke="#9a9a9a" stroke-width="0.7"/><circle cx="793.3" cy="282.86" r="0.9" fill="#9a9a9a"/><path d="M793.3 280.26v1.5M793.3 283.96v1.5M790.6 282.86h1.5M794.6 282.86h1.5" stroke="#9a9a9a" stroke-width="0.6"/><rect x="653.5" y="299.27" width="145" height="0.7" fill="#575757"/><rect x="662.8" y="288.50" width="0.6" height="11.28" fill="#565656"/><rect x="780.9" y="288.50" width="0.6" height="11.28" fill="#565656"/><rect x="789" y="288.50" width="0.6" height="11.28" fill="#565656"/><rect x="680.8" y="288.50" width="0.6" height="11.28" fill="#565656"/><rect x="664.3" y="289.90" width="8.8" height="8.4" fill="#979797"/><path d="M676.0 291.00a1.6 1.6 0 1 1 2 1.5l-1 1" fill="none" stroke="#b8b8b8" stroke-width="0.6"/><circle cx="658.2" cy="294.14" r="2.7" fill="none" stroke="#6a6a6a" stroke-width="0.7"/><path d="M655.6 294.14h5.2" stroke="#6a6a6a" stroke-width="0.6"/><rect x="775.5" y="294.10" width="3.8" height="2.8" fill="#9a9a9a"/><path d="M776.2 294.10v-1.2a1 1 0 0 1 2 0" fill="none" stroke="#9a9a9a" stroke-width="0.6"/><path d="M787.6 296.70c-1-1.2-1.6-3-3-3-1.3 0-2 1.4-2 2.4 0 1.2 0.8 2.2 1.8 2.2 1.4 0 2.4-3 3.2-4.2" fill="none" stroke="#9a9a9a" stroke-width="0.6"/><circle cx="793.3" cy="294.14" r="2.8" fill="none" stroke="#9a9a9a" stroke-width="0.7"/><circle cx="793.3" cy="294.14" r="0.9" fill="#9a9a9a"/><path d="M793.3 291.54v1.5M793.3 295.24v1.5M790.6 294.14h1.5M794.6 294.14h1.5" stroke="#9a9a9a" stroke-width="0.6"/><rect x="653.5" y="310.55" width="145" height="0.7" fill="#575757"/><rect x="662.8" y="299.77" width="0.6" height="11.28" fill="#565656"/><rect x="780.9" y="299.77" width="0.6" height="11.28" fill="#565656"/><rect x="789" y="299.77" width="0.6" height="11.28" fill="#565656"/><rect x="680.8" y="299.77" width="0.6" height="11.28" fill="#565656"/><rect x="664.3" y="301.17" width="8.8" height="8.4" fill="#969696"/><path d="M666.5 307.77l4.5-5" stroke="#555" stroke-width="0.6"/><path d="M676.0 302.27a1.6 1.6 0 1 1 2 1.5l-1 1" fill="none" stroke="#b8b8b8" stroke-width="0.6"/><circle cx="658.2" cy="305.41" r="2.7" fill="none" stroke="#6a6a6a" stroke-width="0.7"/><path d="M655.6 305.41h5.2" stroke="#6a6a6a" stroke-width="0.6"/><rect x="775.5" y="305.38" width="3.8" height="2.8" fill="#9a9a9a"/><path d="M776.2 305.38v-1.2a1 1 0 0 1 2 0" fill="none" stroke="#9a9a9a" stroke-width="0.6"/><path d="M787.6 307.97c-1-1.2-1.6-3-3-3-1.3 0-2 1.4-2 2.4 0 1.2 0.8 2.2 1.8 2.2 1.4 0 2.4-3 3.2-4.2" fill="none" stroke="#9a9a9a" stroke-width="0.6"/><circle cx="793.3" cy="305.41" r="2.8" fill="none" stroke="#9a9a9a" stroke-width="0.7"/><circle cx="793.3" cy="305.41" r="0.9" fill="#9a9a9a"/><path d="M793.3 302.81v1.5M793.3 306.51v1.5M790.6 305.41h1.5M794.6 305.41h1.5" stroke="#9a9a9a" stroke-width="0.6"/><rect x="653.5" y="321.82" width="145" height="0.7" fill="#575757"/><rect x="662.8" y="311.05" width="0.6" height="11.28" fill="#565656"/><rect x="780.9" y="311.05" width="0.6" height="11.28" fill="#565656"/><rect x="789" y="311.05" width="0.6" height="11.28" fill="#565656"/><rect x="680.8" y="311.05" width="0.6" height="11.28" fill="#565656"/><rect x="664.3" y="312.45" width="8.8" height="8.4" fill="#969696"/><path d="M666 315.05l2 2 2-1 1.5 2" fill="none" stroke="#666" stroke-width="0.6"/><path d="M676.0 313.55a1.6 1.6 0 1 1 2 1.5l-1 1" fill="none" stroke="#b8b8b8" stroke-width="0.6"/><circle cx="658.2" cy="316.69" r="2.7" fill="none" stroke="#6a6a6a" stroke-width="0.7"/><path d="M655.6 316.69h5.2" stroke="#6a6a6a" stroke-width="0.6"/><rect x="775.5" y="316.65" width="3.8" height="2.8" fill="#9a9a9a"/><path d="M776.2 316.65v-1.2a1 1 0 0 1 2 0" fill="none" stroke="#9a9a9a" stroke-width="0.6"/><path d="M787.6 319.25c-1-1.2-1.6-3-3-3-1.3 0-2 1.4-2 2.4 0 1.2 0.8 2.2 1.8 2.2 1.4 0 2.4-3 3.2-4.2" fill="none" stroke="#9a9a9a" stroke-width="0.6"/><circle cx="793.3" cy="316.69" r="2.8" fill="none" stroke="#9a9a9a" stroke-width="0.7"/><circle cx="793.3" cy="316.69" r="0.9" fill="#9a9a9a"/><path d="M793.3 314.09v1.5M793.3 317.79v1.5M790.6 316.69h1.5M794.6 316.69h1.5" stroke="#9a9a9a" stroke-width="0.6"/><rect x="653.5" y="333.10" width="145" height="0.7" fill="#575757"/><rect x="662.8" y="322.32" width="0.6" height="11.28" fill="#565656"/><rect x="780.9" y="322.32" width="0.6" height="11.28" fill="#565656"/><rect x="789" y="322.32" width="0.6" height="11.28" fill="#565656"/><rect x="680.8" y="322.32" width="0.6" height="11.28" fill="#565656"/><rect x="664.3" y="323.72" width="8.8" height="8.4" fill="#889886"/><path d="M676.0 324.82a1.6 1.6 0 1 1 2 1.5l-1 1" fill="none" stroke="#b8b8b8" stroke-width="0.6"/><circle cx="658.2" cy="327.96" r="2.7" fill="none" stroke="#6a6a6a" stroke-width="0.7"/><path d="M655.6 327.96h5.2" stroke="#6a6a6a" stroke-width="0.6"/><rect x="775.5" y="327.93" width="3.8" height="2.8" fill="#9a9a9a"/><path d="M776.2 327.93v-1.2a1 1 0 0 1 2 0" fill="none" stroke="#9a9a9a" stroke-width="0.6"/><path d="M787.6 330.52c-1-1.2-1.6-3-3-3-1.3 0-2 1.4-2 2.4 0 1.2 0.8 2.2 1.8 2.2 1.4 0 2.4-3 3.2-4.2" fill="none" stroke="#9a9a9a" stroke-width="0.6"/><circle cx="793.3" cy="327.96" r="2.8" fill="none" stroke="#9a9a9a" stroke-width="0.7"/><circle cx="793.3" cy="327.96" r="0.9" fill="#9a9a9a"/><path d="M793.3 325.36v1.5M793.3 329.06v1.5M790.6 327.96h1.5M794.6 327.96h1.5" stroke="#9a9a9a" stroke-width="0.6"/><rect x="653.5" y="344.38" width="145" height="0.7" fill="#575757"/><rect x="662.8" y="333.60" width="0.6" height="11.28" fill="#565656"/><rect x="780.9" y="333.60" width="0.6" height="11.28" fill="#565656"/><rect x="789" y="333.60" width="0.6" height="11.28" fill="#565656"/><rect x="680.8" y="333.60" width="0.6" height="11.28" fill="#565656"/><rect x="664.3" y="335.00" width="8.8" height="8.4" fill="#95a5b5"/><path d="M676.0 336.10a1.6 1.6 0 1 1 2 1.5l-1 1" fill="none" stroke="#b8b8b8" stroke-width="0.6"/><circle cx="658.2" cy="339.24" r="2.7" fill="none" stroke="#6a6a6a" stroke-width="0.7"/><path d="M655.6 339.24h5.2" stroke="#6a6a6a" stroke-width="0.6"/><rect x="775.5" y="339.20" width="3.8" height="2.8" fill="#9a9a9a"/><path d="M776.2 339.20v-1.2a1 1 0 0 1 2 0" fill="none" stroke="#9a9a9a" stroke-width="0.6"/><path d="M787.6 341.80c-1-1.2-1.6-3-3-3-1.3 0-2 1.4-2 2.4 0 1.2 0.8 2.2 1.8 2.2 1.4 0 2.4-3 3.2-4.2" fill="none" stroke="#9a9a9a" stroke-width="0.6"/><circle cx="793.3" cy="339.24" r="2.8" fill="none" stroke="#9a9a9a" stroke-width="0.7"/><circle cx="793.3" cy="339.24" r="0.9" fill="#9a9a9a"/><path d="M793.3 336.64v1.5M793.3 340.34v1.5M790.6 339.24h1.5M794.6 339.24h1.5" stroke="#9a9a9a" stroke-width="0.6"/><rect x="653.5" y="355.65" width="145" height="0.7" fill="#575757"/><rect x="662.8" y="344.88" width="0.6" height="11.28" fill="#565656"/><rect x="780.9" y="344.88" width="0.6" height="11.28" fill="#565656"/><rect x="789" y="344.88" width="0.6" height="11.28" fill="#565656"/><rect x="680.8" y="344.88" width="0.6" height="11.28" fill="#565656"/><rect x="664.3" y="346.27" width="8.8" height="8.4" fill="#979797"/><path d="M676.0 347.38a1.6 1.6 0 1 1 2 1.5l-1 1" fill="none" stroke="#b8b8b8" stroke-width="0.6"/><circle cx="658.2" cy="350.51" r="2.7" fill="none" stroke="#6a6a6a" stroke-width="0.7"/><path d="M655.6 350.51h5.2" stroke="#6a6a6a" stroke-width="0.6"/><rect x="775.5" y="350.48" width="3.8" height="2.8" fill="#9a9a9a"/><path d="M776.2 350.48v-1.2a1 1 0 0 1 2 0" fill="none" stroke="#9a9a9a" stroke-width="0.6"/><path d="M787.6 353.07c-1-1.2-1.6-3-3-3-1.3 0-2 1.4-2 2.4 0 1.2 0.8 2.2 1.8 2.2 1.4 0 2.4-3 3.2-4.2" fill="none" stroke="#9a9a9a" stroke-width="0.6"/><circle cx="793.3" cy="350.51" r="2.8" fill="none" stroke="#9a9a9a" stroke-width="0.7"/><circle cx="793.3" cy="350.51" r="0.9" fill="#9a9a9a"/><path d="M793.3 347.91v1.5M793.3 351.61v1.5M790.6 350.51h1.5M794.6 350.51h1.5" stroke="#9a9a9a" stroke-width="0.6"/><rect x="653.5" y="366.92" width="145" height="0.7" fill="#575757"/><rect x="662.8" y="356.15" width="0.6" height="11.28" fill="#565656"/><rect x="780.9" y="356.15" width="0.6" height="11.28" fill="#565656"/><rect x="789" y="356.15" width="0.6" height="11.28" fill="#565656"/><rect x="680.8" y="356.15" width="0.6" height="11.28" fill="#565656"/><rect x="664.3" y="357.55" width="8.8" height="8.4" fill="#f2f2f2"/><path d="M666 360.15l2 1.5M669 359.15l1.5 2M667 363.15h3" stroke="#999" stroke-width="0.5"/><path d="M676.0 358.65a1.6 1.6 0 1 1 2 1.5l-1 1" fill="none" stroke="#b8b8b8" stroke-width="0.6"/><path d="M655.2 361.79q3-3.2 6 0q-3 3.2-6 0z" fill="#eee"/><circle cx="658.2" cy="361.59" r="1.1" fill="#444"/><path d="M655.5 363.99q2.7 2.2 5.4 0" fill="none" stroke="#bbb" stroke-width="0.5"/><rect x="775.5" y="361.75" width="3.8" height="2.8" fill="#b8b8b8"/><path d="M776.2 361.75v-1.2a1 1 0 0 1 2 0" fill="none" stroke="#b8b8b8" stroke-width="0.6"/><path d="M787.6 364.35c-1-1.2-1.6-3-3-3-1.3 0-2 1.4-2 2.4 0 1.2 0.8 2.2 1.8 2.2 1.4 0 2.4-3 3.2-4.2" fill="none" stroke="#b8b8b8" stroke-width="0.6"/><circle cx="793.3" cy="361.79" r="2.8" fill="none" stroke="#b8b8b8" stroke-width="0.7"/><circle cx="793.3" cy="361.79" r="0.9" fill="#b8b8b8"/><path d="M793.3 359.19v1.5M793.3 362.89v1.5M790.6 361.79h1.5M794.6 361.79h1.5" stroke="#b8b8b8" stroke-width="0.6"/><rect x="653.5" y="378.20" width="145" height="0.7" fill="#575757"/><rect x="674" y="367.62" width="124.5" height="10.68" fill="#5a87cf"/><rect x="662.8" y="367.43" width="0.6" height="11.28" fill="#565656"/><rect x="780.9" y="367.43" width="0.6" height="11.28" fill="#565656"/><rect x="789" y="367.43" width="0.6" height="11.28" fill="#565656"/><rect x="680.8" y="367.43" width="0.6" height="11.28" fill="#565656"/><rect x="664.3" y="368.82" width="8.8" height="8.4" fill="#f2f2f2"/><path d="M666 371.43l2 1.5M669 370.43l1.5 2M667 374.43h3" stroke="#999" stroke-width="0.5"/><path d="M676.0 369.93a1.6 1.6 0 1 1 2 1.5l-1 1" fill="none" stroke="#b8b8b8" stroke-width="0.6"/><path d="M655.2 373.06q3-3.2 6 0q-3 3.2-6 0z" fill="#eee"/><circle cx="658.2" cy="372.86" r="1.1" fill="#444"/><path d="M655.5 375.26q2.7 2.2 5.4 0" fill="none" stroke="#bbb" stroke-width="0.5"/><rect x="775.5" y="373.03" width="3.8" height="2.8" fill="#b0c4e8"/><path d="M776.2 373.03v-1.2a1 1 0 0 1 2 0" fill="none" stroke="#b0c4e8" stroke-width="0.6"/><path d="M787.6 375.62c-1-1.2-1.6-3-3-3-1.3 0-2 1.4-2 2.4 0 1.2 0.8 2.2 1.8 2.2 1.4 0 2.4-3 3.2-4.2" fill="none" stroke="#b0c4e8" stroke-width="0.6"/><circle cx="793.3" cy="373.06" r="2.8" fill="none" stroke="#b0c4e8" stroke-width="0.7"/><circle cx="793.3" cy="373.06" r="0.9" fill="#b0c4e8"/><path d="M793.3 370.46v1.5M793.3 374.16v1.5M790.6 373.06h1.5M794.6 373.06h1.5" stroke="#b0c4e8" stroke-width="0.6"/><rect x="653.5" y="389.48" width="145" height="0.7" fill="#575757"/><rect x="662.8" y="378.70" width="0.6" height="11.28" fill="#565656"/><rect x="780.9" y="378.70" width="0.6" height="11.28" fill="#565656"/><rect x="789" y="378.70" width="0.6" height="11.28" fill="#565656"/><rect x="680.8" y="378.70" width="0.6" height="11.28" fill="#565656"/><rect x="664.3" y="380.10" width="8.8" height="8.4" fill="#ffffff"/><path d="M676.0 381.20a1.6 1.6 0 1 1 2 1.5l-1 1" fill="none" stroke="#b8b8b8" stroke-width="0.6"/><path d="M655.2 384.34q3-3.2 6 0q-3 3.2-6 0z" fill="#eee"/><circle cx="658.2" cy="384.14" r="1.1" fill="#444"/><path d="M655.5 386.54q2.7 2.2 5.4 0" fill="none" stroke="#bbb" stroke-width="0.5"/><rect x="775.3" y="383.70" width="4.4" height="3.4" fill="#e8e8e8"/><path d="M776.2 383.70v-1.3a1.3 1.3 0 0 1 2.6 0v1.3" fill="none" stroke="#e8e8e8" stroke-width="0.7"/><path d="M787.6 386.90c-1-1.2-1.6-3-3-3-1.3 0-2 1.4-2 2.4 0 1.2 0.8 2.2 1.8 2.2 1.4 0 2.4-3 3.2-4.2" fill="none" stroke="#b8b8b8" stroke-width="0.6"/><circle cx="793.3" cy="384.34" r="2.8" fill="none" stroke="#b8b8b8" stroke-width="0.7"/><circle cx="793.3" cy="384.34" r="0.9" fill="#b8b8b8"/><path d="M793.3 381.74v1.5M793.3 385.44v1.5M790.6 384.34h1.5M794.6 384.34h1.5" stroke="#b8b8b8" stroke-width="0.6"/><g fill="none" stroke="#d8d8d8" stroke-width="0.8" stroke-linecap="round" stroke-linejoin="round"><rect x="655.2" y="409.2" width="7" height="7" rx="0.5"/><path d="M658.7 410.8v3.8M656.8 412.7h3.8"/><path d="M667.2 412l1.5 1.5 1.5-1.5" stroke="#aaa"/><rect x="679.5" y="409.2" width="5.2" height="5.2"/><path d="M677.5 411.2v5.2h5.2"/><path d="M692.7 411.2l3.5 3.5 3.5-3.5"/><path d="M707.5 414.7l3.5-3.5 3.5 3.5"/><path d="M722 410.5h8M722 412.8h8M722 415.1h8"/><path d="M727 409.7v1.6M724.4 412v1.6M727.8 414.3v1.6" stroke-width="1.1"/><path d="M788.8 410.5h5.6M790.3 410.3v-0.8h2.6v0.8"/><path d="M789.5 411.5h4.2v4.6h-4.2z" fill="#d8d8d8"/></g></svg>
<div class="t" style="left:688.8px;top:246.7px;font-size:5.25px;color:#989898;">Layer 12</div>
<div class="t" style="left:699.8px;top:257.98px;font-size:5.25px;color:#989898;">icefine_tat.png</div>
<div class="t" style="left:699.8px;top:269.25px;font-size:5.25px;color:#989898;">Layer 11</div>
<div class="t" style="left:688.8px;top:280.53px;font-size:5.25px;color:#989898;">Copy of Layer 4</div>
<div class="t" style="left:688.8px;top:291.8px;font-size:5.25px;color:#989898;">Layer 8</div>
<div class="t" style="left:688.8px;top:303.07px;font-size:5.25px;color:#989898;">Layer 6</div>
<div class="t" style="left:688.8px;top:314.35px;font-size:5.25px;color:#989898;">Layer 5</div>
<div class="t" style="left:688.8px;top:325.62px;font-size:5.25px;color:#989898;">Layer 7</div>
<div class="t" style="left:688.8px;top:336.9px;font-size:5.25px;color:#989898;">Layer 10</div>
<div class="t" style="left:688.8px;top:348.18px;font-size:5.25px;color:#989898;">Layer 4</div>
<div class="t" style="left:688.8px;top:359.45px;font-size:5.25px;color:#e6e6e6;">Layer 2</div>
<div class="t" style="left:688.8px;top:370.73px;font-size:5.25px;color:#eef2ff;">Layer 1</div>
<div class="t" style="left:688.8px;top:382.0px;font-size:5.25px;color:#dedede;">Background</div>
<svg class="a" style="left:0;top:0" width="800" height="439"><defs><linearGradient id="fire" x1="0" y1="377" x2="0" y2="418" gradientUnits="userSpaceOnUse"><stop offset="0" stop-color="#c4a848"/><stop offset="0.45" stop-color="#cc8a3c"/><stop offset="1" stop-color="#c84434"/></linearGradient></defs><g fill="none" stroke="#24308a" stroke-width="2.2" stroke-linecap="round" stroke-linejoin="round" opacity="0.9"><path d="M752.6 330.5v37.5q-1 2.5-4.5 1.5"/><path d="M739 334l4.5 5.5"/><path d="M732.8 346.3h14.5l-12 20" stroke-width="2.1"/><path d="M767.6 338.8l-12 10.5"/><path d="M755.5 349.5l15.5 16.5" stroke-width="2.6"/></g><g fill="none" stroke="url(#fire)" stroke-width="2.1" stroke-linecap="round" stroke-linejoin="round" opacity="0.85"><path d="M749 378v17"/><path d="M740.5 389l-4 10.5"/><path d="M765 387.5l-7 7.5"/><path d="M750 396q-6 13-18.5 20.5" stroke-width="2.6"/><path d="M751.5 396q6 12 16 18" stroke-width="2.8"/></g></svg><!--/DOCK-->
<!--WHEEL--><div class="a" style="left:667.3px;top:54.6px;width:110.6px;height:110.6px;border-radius:50%;background:conic-gradient(from 0deg,#80ff00,#00ff00 30deg,#00ffff 90deg,#0000ff 150deg,#ff00ff 210deg,#ff0000 270deg,#ffff00 330deg,#80ff00 360deg);-webkit-mask:radial-gradient(circle,transparent 45.7px,#000 46.3px)"></div>
<svg class="a" style="left:0;top:0" width="800" height="439">
<defs><linearGradient id="tg1" x1="683.2" y1="133.6" x2="763.0" y2="133.6" gradientUnits="userSpaceOnUse"><stop offset="0" stop-color="#fff"/><stop offset="1" stop-color="#e8c80c"/></linearGradient>
<linearGradient id="tg2" x1="722.6" y1="64.2" x2="722.6" y2="133.6" gradientUnits="userSpaceOnUse"><stop offset="0" stop-color="#000" stop-opacity="1"/><stop offset="1" stop-color="#000" stop-opacity="0"/></linearGradient></defs>
<polygon points="722.6,64.2 683.2,133.6 763.0,133.6" fill="url(#tg1)"/>
<polygon points="722.6,64.2 683.2,133.6 763.0,133.6" fill="url(#tg2)"/>
<line x1="696.5" y1="72.6" x2="690.6" y2="64.2" stroke="#222" stroke-width="0.8"/>
<circle cx="684.2" cy="133.1" r="1.8" fill="#fff" stroke="#333" stroke-width="0.6"/>
</svg><!--/WHEEL-->
</body></html>
